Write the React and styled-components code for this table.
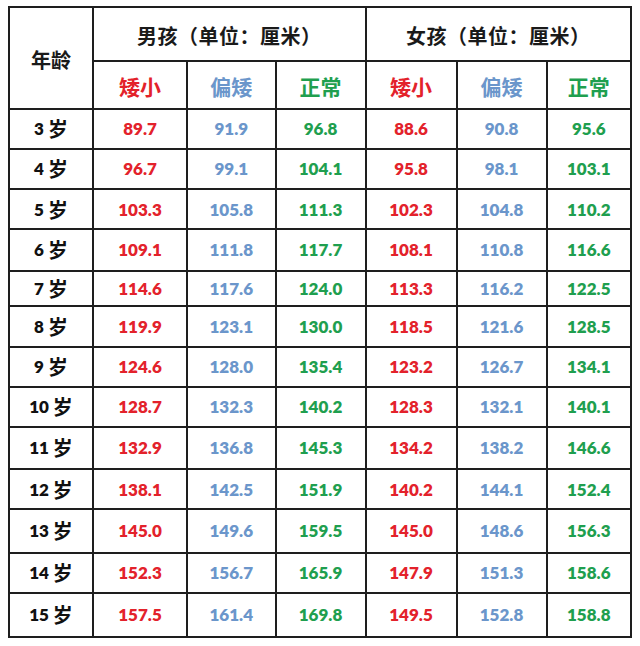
import React from 'react'
import styled, { createGlobalStyle } from 'styled-components'

const red = '#e3222b'
const blue = '#6b96cb'
const green = '#1f9f4f'
const line = '#1e1e1e'

const GlobalStyle = createGlobalStyle`
    body{
        margin: 0;
        background: white;
        font-family: Lato, "Noto Sans CJK SC", sans-serif;
    }
`;

const Page = styled.div`
    padding: 6px 0 0 8px;
`;

const Table = styled.div`
    display: grid;
    width: max-content;
    grid-template-columns: 82px 92px 86.5px 88px 89px 88px 82.5px;
    grid-template-rows: 52px 45.7px 38px 38.3px 38.3px 39.4px 33.3px 39.3px 37.4px 38px 40.3px 38.3px 41.4px 38px 42px;
    gap: 2px;
    padding: 2px;
    background: ${line};
`;

const Cell = styled.div`
    background: white;
    display: flex;
    align-items: center;
    justify-content: center;
    white-space: nowrap;
`;

const AgeHead = styled(Cell)`
    grid-row: 1 / span 2;
    font-family: "Noto Sans CJK SC", sans-serif;
    font-weight: 700;
    font-size: 20px;
    color: #1a1a1a;
    padding-top: 4px;
`;

const GroupHead = styled(Cell)`
    grid-column: span 3;
    font-family: "Noto Sans CJK SC", sans-serif;
    font-weight: 600;
    font-size: 20px;
    letter-spacing: 0.5px;
    color: #1a1a1a;
    padding-top: 2px;
`;

const SubHead = styled(Cell)`
    font-family: "Noto Sans CJK SC", sans-serif;
    font-weight: 700;
    font-size: 21px;
    color: ${p => p.$color};
    padding-top: 2px;
`;

const Age = styled(Cell)`
    font-weight: 800;
    font-size: 17px;
    color: #111;
    span{
        font-family: "Noto Sans CJK SC", sans-serif;
        font-weight: 700;
        font-size: 20px;
        margin-left: 4px;
    }
`;

const Num = styled(Cell)`
    font-weight: 800;
    font-size: 17px;
    color: ${p => p.$color};
`;

const kinds = [
    { label: '矮小', color: red },
    { label: '偏矮', color: blue },
    { label: '正常', color: green },
]

const rows = [
    [3, 89.7, 91.9, 96.8, 88.6, 90.8, 95.6],
    [4, 96.7, 99.1, 104.1, 95.8, 98.1, 103.1],
    [5, 103.3, 105.8, 111.3, 102.3, 104.8, 110.2],
    [6, 109.1, 111.8, 117.7, 108.1, 110.8, 116.6],
    [7, 114.6, 117.6, 124.0, 113.3, 116.2, 122.5],
    [8, 119.9, 123.1, 130.0, 118.5, 121.6, 128.5],
    [9, 124.6, 128.0, 135.4, 123.2, 126.7, 134.1],
    [10, 128.7, 132.3, 140.2, 128.3, 132.1, 140.1],
    [11, 132.9, 136.8, 145.3, 134.2, 138.2, 146.6],
    [12, 138.1, 142.5, 151.9, 140.2, 144.1, 152.4],
    [13, 145.0, 149.6, 159.5, 145.0, 148.6, 156.3],
    [14, 152.3, 156.7, 165.9, 147.9, 151.3, 158.6],
    [15, 157.5, 161.4, 169.8, 149.5, 152.8, 158.8],
]

const App = () => {
    return(
        <Page>
            <GlobalStyle />
            <Table>
                <AgeHead>年龄</AgeHead>
                <GroupHead>男孩（单位：厘米）</GroupHead>
                <GroupHead>女孩（单位：厘米）</GroupHead>
                {[...kinds, ...kinds].map((k, i) => (
                    <SubHead key={i} $color={k.color}>{k.label}</SubHead>
                ))}
                {rows.map(([age, ...values]) => (
                    <React.Fragment key={age}>
                        <Age>{age}<span>岁</span></Age>
                        {values.map((v, i) => (
                            <Num key={i} $color={kinds[i % 3].color}>{v.toFixed(1)}</Num>
                        ))}
                    </React.Fragment>
                ))}
            </Table>
        </Page>
    );
}

export default App;
